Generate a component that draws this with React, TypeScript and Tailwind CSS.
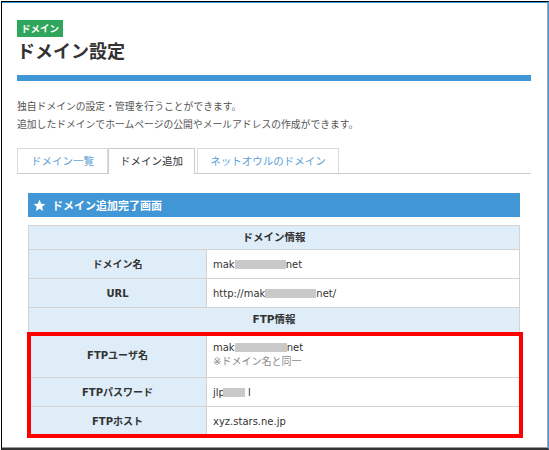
import React from "react";

const FONT = '"DejaVu Sans", "Noto Sans CJK JP", sans-serif';
const JFONT = '"Noto Sans CJK JP", sans-serif';

function Blur({ w }: { w: number }) {
  return (
    <span
      className="inline-block h-[9px] bg-[#c9c9c9] align-[-1px]"
      style={{ width: w }}
    />
  );
}

function Row({
  label,
  h,
  children,
}: {
  label: string;
  h: string;
  children: React.ReactNode;
}) {
  return (
    <div className={`flex border-b border-[#d3d3d3] ${h}`}>
      <div className="w-[178px] shrink-0 border-r border-[#d3d3d3] bg-[#deedf8] flex items-center justify-center font-bold text-[10px] text-[#333]">
        {label}
      </div>
      <div className="flex-1 bg-white flex flex-col justify-center pl-[6px] text-[10px] text-[#333]">
        {children}
      </div>
    </div>
  );
}

function Head({ text, h }: { text: string; h: string }) {
  return (
    <div
      className={`flex items-center justify-center border-b border-[#d3d3d3] bg-[#deedf8] font-bold text-[10.5px] text-[#333] ${h}`}
    >
      {text}
    </div>
  );
}

export default function App() {
  return (
    <div
      className="w-[549px] h-[450px] bg-white pt-px pl-px overflow-hidden"
      style={{ fontFamily: FONT }}
    >
      <div className="w-[548px] h-[449px] border-l border-t border-black border-r border-r-[#3f97d8] border-b-2 border-b-[#333]">
        <div className="h-full border-t border-t-[#3f97d8] border-r border-r-[#a8a8a8] border-b border-b-[#9c9c9c] pt-[17px] pl-[15px] pr-[16px]">
          <div className="flex">
            <span
              className="block bg-[#2fa65b] text-white font-bold text-[9.5px] px-[4px] h-[17px] leading-[17px]"
              style={{ fontFamily: JFONT }}
            >
              ドメイン
            </span>
          </div>
          <h1
            className="mt-[2px] text-[18px] font-bold leading-[22px] text-[#333]"
            style={{ fontFamily: JFONT }}
          >
            ドメイン設定
          </h1>
          <div className="mt-[14px] h-[6px] bg-[#4196d5]" />
          <div
            className="mt-[16px] text-[9.8px] leading-[18px] text-[#555]"
            style={{ fontFamily: JFONT }}
          >
            <p>独自ドメインの設定・管理を行うことができます。</p>
            <p>追加したドメインでホームページの公開やメールアドレスの作成ができます。</p>
          </div>
          <div
            className="mt-[15px] flex items-end border-b border-[#cccccc] text-[10.5px]"
            style={{ fontFamily: JFONT }}
          >
            <div className="w-[91px] h-[25px] border border-b-0 border-[#dadada] flex items-center justify-center text-[#5d9fd6]">
              ドメイン一覧
            </div>
            <div className="w-[87px] h-[26px] -mb-px border border-b-0 border-[#cccccc] bg-white flex items-center justify-center text-[#333] pb-px">
              ドメイン追加
            </div>
            <div className="ml-[2px] w-[142px] h-[25px] border border-b-0 border-[#dadada] flex items-center justify-center text-[#5d9fd6]">
              ネットオウルのドメイン
            </div>
          </div>

          <div className="px-[11px]">
            <div className="mt-[19px] h-[24px] bg-[#4196d5] flex items-center pl-[5px] gap-[6px] text-white">
              <svg width="13" height="13" viewBox="0 0 24 24" fill="white">
                <path d="M12 1.5l3.1 7.1 7.7.7-5.8 5.1 1.7 7.6L12 18.1 5.3 22l1.7-7.6L1.2 9.3l7.7-.7z" />
              </svg>
              <span
                className="font-bold text-[11px]"
                style={{ fontFamily: JFONT }}
              >
                ドメイン追加完了画面
              </span>
            </div>

            <div className="relative mt-[8px]">
              <div className="border-l border-r border-t border-[#d3d3d3]">
                <Head text="ドメイン情報" h="h-[24px]" />
                <Row label="ドメイン名" h="h-[29px]">
                  <div>
                    mak
                    <Blur w={51} />
                    net
                  </div>
                </Row>
                <Row label="URL" h="h-[29px]">
                  <div>
                    http://mak
                    <Blur w={51} />
                    net/
                  </div>
                </Row>
                <Head text="FTP情報" h="h-[25px]" />
                <Row label="FTPユーザ名" h="h-[45px]">
                  <div className="leading-[14px]">
                    mak
                    <Blur w={52} />
                    net
                  </div>
                  <div className="leading-[14px] text-[#888]">※ドメイン名と同一</div>
                </Row>
                <Row label="FTPパスワード" h="h-[29px]">
                  <div>
                    jlp
                    <span className="inline-block h-[9px] w-[22px] -ml-[2px] mr-[3px] bg-[#c9c9c9] align-[-1px]" />
                    l
                  </div>
                </Row>
                <Row label="FTPホスト" h="h-[29px]">
                  <div>xyz.stars.ne.jp</div>
                </Row>
              </div>
              <div className="absolute left-[-1px] top-[107px] w-[496px] h-[106px] border-4 border-[#ff0000]" />
            </div>
          </div>
        </div>
      </div>
    </div>
  );
}
